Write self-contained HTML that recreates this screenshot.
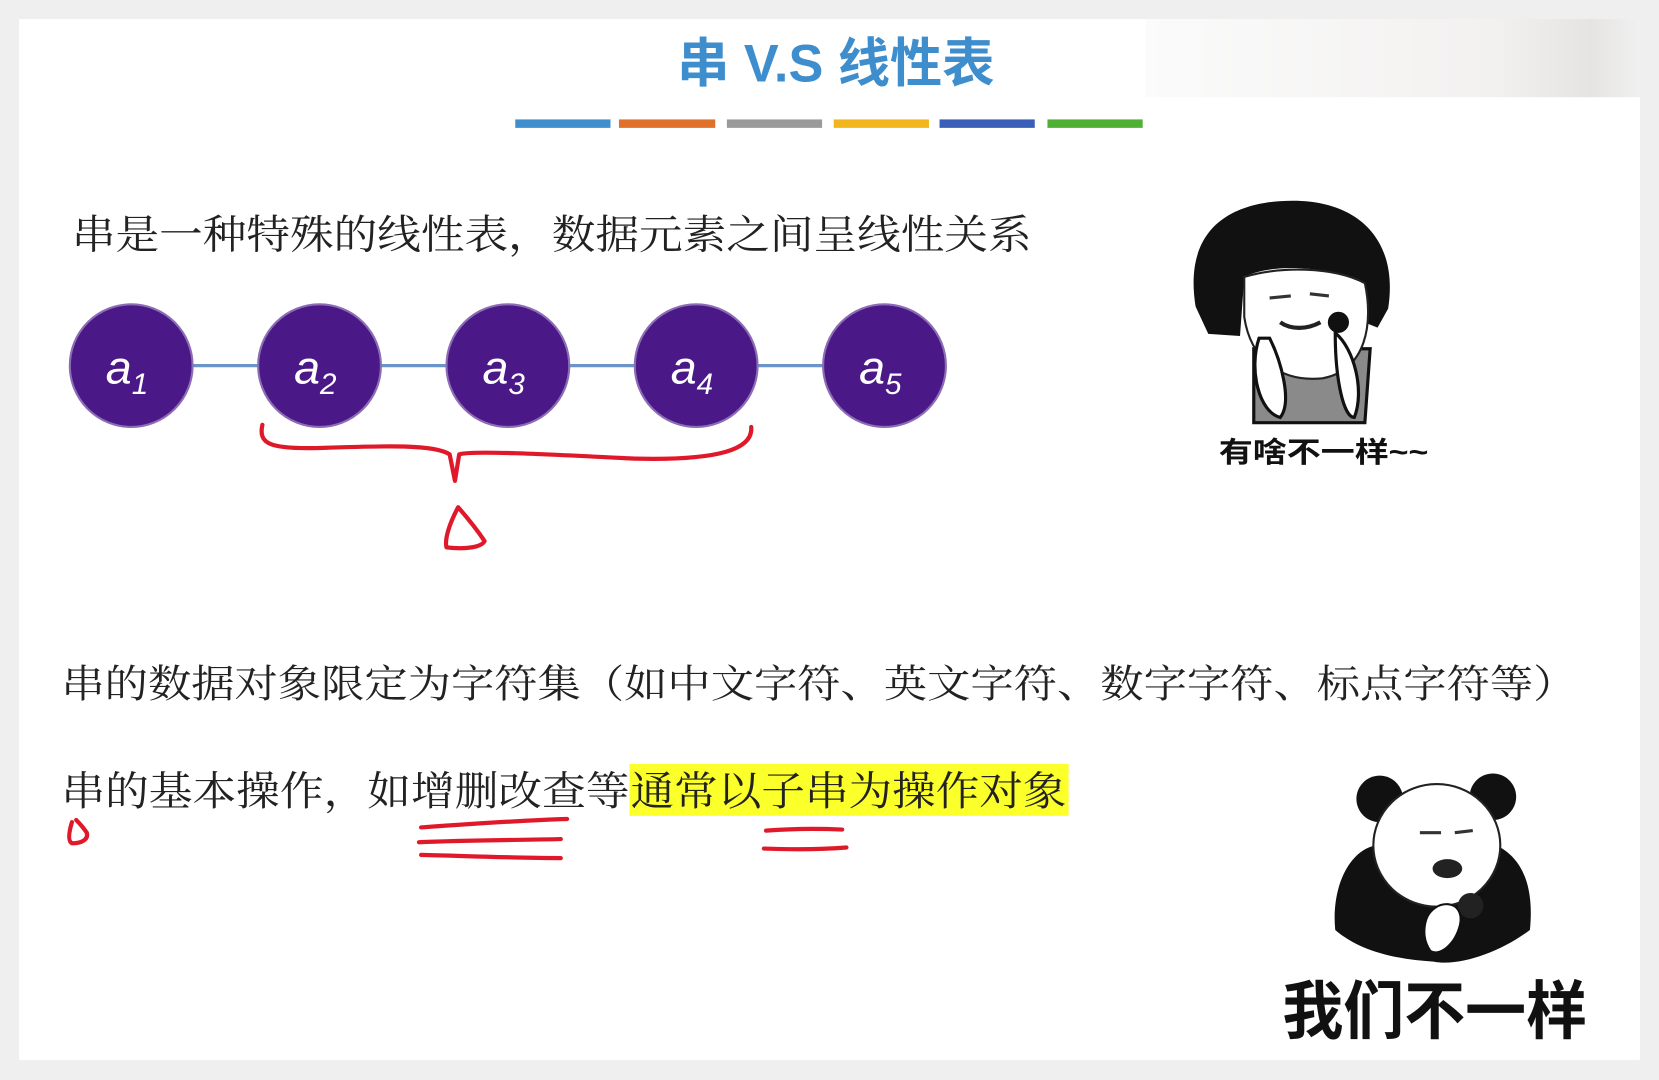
<!DOCTYPE html>
<html><head><meta charset="utf-8"><style>
html,body{margin:0;padding:0;background:#eeeeee;width:1659px;height:1080px;overflow:hidden}
svg{display:block}
text{font-family:"Liberation Serif","Noto Serif CJK SC","Noto Sans CJK SC",serif}
.s{font-family:"Liberation Sans","Noto Sans CJK SC",sans-serif}
</style></head><body>
<svg width="1659" height="1080" viewBox="0 0 1568 1022" preserveAspectRatio="none">
<defs><linearGradient id="g" x1="0" x2="1"><stop offset="0" stop-color="#fbfbfb"/><stop offset="0.7" stop-color="#f3f1f0"/><stop offset="0.9" stop-color="#e6e4e3"/><stop offset="1" stop-color="#f0f0f0"/></linearGradient></defs>
<rect x="0" y="0" width="1568" height="1022" fill="#efefef"/>
<rect x="18" y="18" width="1532" height="985" fill="#fff"/>
<rect x="1083" y="18" width="467" height="74" fill="url(#g)"/>
<text class="s" x="640" y="77" font-size="50" font-weight="bold" fill="#3e8ece" textLength="300" lengthAdjust="spacingAndGlyphs">串 V.S 线性表</text>
<g>
<rect x="487" y="113" width="90" height="8" fill="#3f8fcf"/>
<rect x="585" y="113" width="91" height="8" fill="#e0702a"/>
<rect x="687" y="113" width="90" height="8" fill="#9a9a9a"/>
<rect x="788" y="113" width="90" height="8" fill="#f2b51c"/>
<rect x="888" y="113" width="90" height="8" fill="#3a5fb8"/>
<rect x="990" y="113" width="90" height="8" fill="#4fb033"/>
</g>
<text x="68" y="235" font-size="38" fill="#222" textLength="907" lengthAdjust="spacingAndGlyphs">串是一种特殊的线性表，数据元素之间呈线性关系</text>
<line x1="124" y1="346" x2="836" y2="346" stroke="#6b95c9" stroke-width="3"/>
<g fill="#4b1887" stroke="#8b6cb5" stroke-width="2">
<circle cx="124" cy="346" r="58"/><circle cx="302" cy="346" r="58"/><circle cx="480" cy="346" r="58"/><circle cx="658" cy="346" r="58"/><circle cx="836" cy="346" r="58"/>
</g>
<g fill="#fff" font-style="italic">
<text x="100" y="363" font-size="44" class="s">a<tspan font-size="28" dy="10">1</tspan></text>
<text x="278" y="363" font-size="44" class="s">a<tspan font-size="28" dy="10">2</tspan></text>
<text x="456" y="363" font-size="44" class="s">a<tspan font-size="28" dy="10">3</tspan></text>
<text x="634" y="363" font-size="44" class="s">a<tspan font-size="28" dy="10">4</tspan></text>
<text x="812" y="363" font-size="44" class="s">a<tspan font-size="28" dy="10">5</tspan></text>
</g>
<g fill="none" stroke="#e0192a" stroke-width="4" stroke-linecap="round" stroke-linejoin="round">
<path d="M248 402 C244 420 255 425 300 424 C360 422 410 420 425 430 L430 455 L434 430 C445 426 520 430 600 434 C680 436 712 425 710 404"/>
<path d="M433 480 C425 495 420 510 422 518 C440 520 455 518 458 512 C450 500 440 488 433 480"/>
<path d="M68 778 C65 788 64 796 68 798 C76 798 84 795 82 788 C78 782 74 778 72 776"/>
<path d="M398 783 C440 780 500 776 536 775"/>
<path d="M396 797 C440 795 490 795 530 794"/>
<path d="M398 809 C440 810 490 812 530 812"/>
<path d="M724 786 C750 784 775 784 796 785"/>
<path d="M722 803 C750 804 775 804 800 802"/>
</g>
<text x="58" y="660" font-size="37" fill="#222" textLength="1432" lengthAdjust="spacingAndGlyphs">串的数据对象限定为字符集（如中文字符、英文字符、数字字符、标点字符等）</text>
<rect x="595" y="723" width="415" height="49" fill="#fbff2a"/>
<text x="58" y="762" font-size="38" fill="#222" textLength="537" lengthAdjust="spacingAndGlyphs">串的基本操作，如增删改查等</text>
<text x="596" y="762" font-size="38" fill="#222" textLength="412" lengthAdjust="spacingAndGlyphs">通常以子串为操作对象</text>
<!-- mushroom head meme -->
<g>
<path d="M1185 330 L1185 400 L1290 400 L1295 330 Z" fill="#8a8a8a" stroke="#111" stroke-width="3"/>
<path d="M1130 290 C1118 215 1165 190 1222 190 C1285 190 1322 228 1312 292 L1302 310 L1292 306 L1290 268 C1250 250 1200 250 1176 262 L1172 318 L1142 316 Z" fill="#111"/>
<path d="M1176 262 C1210 252 1260 252 1290 268 C1298 305 1292 350 1250 358 C1210 362 1182 340 1176 300 Z" fill="#fff" stroke="#222" stroke-width="2"/>
<ellipse cx="1265" cy="305" rx="10" ry="10" fill="#111"/>
<path d="M1190 320 C1180 350 1190 390 1210 395 C1222 380 1210 340 1200 320 Z" fill="#fff" stroke="#111" stroke-width="3"/>
<path d="M1262 315 C1280 330 1290 370 1280 395 C1270 395 1262 360 1262 315 Z" fill="#fff" stroke="#111" stroke-width="3"/>
<path d="M1210 305 C1220 312 1235 312 1248 305" stroke="#222" stroke-width="4" fill="none"/>
<path d="M1200 282 L1220 280 M1238 278 L1256 280" stroke="#333" stroke-width="3"/>
</g>
<text class="s" x="1152" y="437" font-size="27" font-weight="bold" fill="#111" textLength="198" lengthAdjust="spacingAndGlyphs">有啥不一样~~</text>
<!-- panda meme -->
<g>
<path d="M1262 880 C1258 840 1275 805 1300 800 L1410 798 C1440 810 1450 840 1446 880 C1420 900 1380 915 1355 910 C1320 908 1285 900 1262 880 Z" fill="#111"/>
<circle cx="1304" cy="756" r="22" fill="#111"/>
<circle cx="1411" cy="754" r="22" fill="#111"/>
<ellipse cx="1358" cy="800" rx="60" ry="58" fill="#fff" stroke="#222" stroke-width="2"/>
<path d="M1342 788 L1362 788 M1375 788 L1392 786" stroke="#333" stroke-width="3"/>
<ellipse cx="1368" cy="822" rx="14" ry="9" fill="#222"/>
<circle cx="1390" cy="857" r="12" fill="#222"/>
<path d="M1348 870 C1355 850 1385 850 1380 875 C1375 895 1360 905 1352 900 C1345 890 1345 880 1348 870 Z" fill="#fff" stroke="#111" stroke-width="2"/>
</g>
<text class="s" x="1212" y="978" font-size="60" font-weight="bold" fill="#111" textLength="288" lengthAdjust="spacingAndGlyphs">我们不一样</text>
</svg>
</body></html>
